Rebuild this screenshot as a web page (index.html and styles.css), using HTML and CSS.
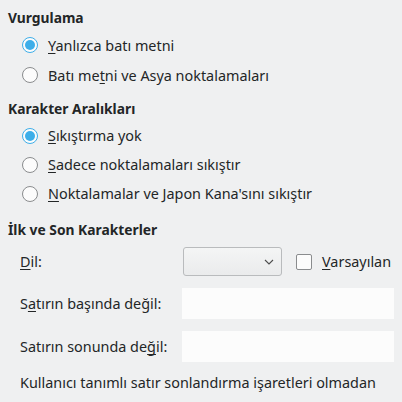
FILE: index.html
```html
<!DOCTYPE html>
<html lang="tr">
<head>
    <meta charset="UTF-8">
    <title>Asya Tipografisi</title>
    <link rel="stylesheet" href="styles.css">
</head>
<body>
    <div class="page">
        <section class="group">
            <h2 class="group-title">Vurgulama</h2>
            <div class="options first">
                <label class="radio-row"><span class="radio checked"></span><span><u>Y</u>anlızca batı metni</span></label>
                <label class="radio-row"><span class="radio"></span><span>Batı me<u>t</u>ni ve Asya noktalamaları</span></label>
            </div>
        </section>

        <section class="group">
            <h2 class="group-title">Karakter Aralıkları</h2>
            <div class="options second">
                <label class="radio-row"><span class="radio checked"></span><span><u>S</u>ıkıştırma yok</span></label>
                <label class="radio-row"><span class="radio"></span><span><u>S</u>adece noktalamaları sıkıştır</span></label>
                <label class="radio-row"><span class="radio"></span><span><u>N</u>oktalamalar ve Japon Kana'sını sıkıştır</span></label>
            </div>
        </section>

        <section class="group">
            <h2 class="group-title">İlk ve Son Karakterler</h2>
            <div class="form-grid">
                <span class="field-label"><u>D</u>il:</span>
                <div class="lang-row">
                    <div class="combo">
                        <svg width="10" height="6" viewBox="0 0 10 6"><path d="M1 1 L5 5 L9 1" fill="none" stroke="#4d4d4d" stroke-width="1.1"/></svg>
                    </div>
                    <label class="check-row"><span class="checkbox"></span><span><u>V</u>arsayılan</span></label>
                </div>

                <span class="field-label">S<u>a</u>tırın başında değil:</span>
                <div class="text-field"></div>

                <span class="field-label">Satırın sonunda de<u>ğ</u>il:</span>
                <div class="text-field"></div>
            </div>
            <p class="note">Kullanıcı tanımlı satır sonlandırma işaretleri olmadan</p>
        </section>
    </div>
</body>
</html>
```

FILE: styles.css
```css
body {
    margin: 0;
    background: #eff0f1;
    color: #232627;
    font-family: 'Noto Sans', sans-serif;
    font-size: 14.4px;
}

.page {
    padding: 8px 8px 0 8px;
}

.group-title {
    margin: 0;
    height: 20px;
    line-height: 20px;
    font-size: 13.8px;
    font-weight: bold;
}

u {
    text-decoration-skip-ink: none;
    text-underline-offset: 2px;
}

/* radio lists */
.options {
    display: flex;
    flex-direction: column;
    padding-left: 14px;
    margin-top: 2px;
    margin-bottom: 9px;
}

.options.first .radio-row {
    height: 30px;
}

.options.second {
    margin-bottom: 12px;
}

.radio-row {
    display: flex;
    align-items: center;
    gap: 10px;
    height: 29px;
}

.radio {
    width: 14px;
    height: 14px;
    border: 1px solid #8a8c8e;
    border-radius: 50%;
    background: #fcfcfc;
    position: relative;
    flex-shrink: 0;
}

.radio.checked {
    border-color: #3daee9;
}

.radio.checked::after {
    content: '';
    position: absolute;
    left: 2px;
    top: 2px;
    width: 10px;
    height: 10px;
    border-radius: 50%;
    background: #3daee9;
}

/* first/last chars form */
.form-grid {
    display: grid;
    grid-template-columns: 162px 1fr;
    grid-template-rows: 29px 31px 31px;
    row-gap: 12px;
    align-items: center;
    padding-left: 12px;
    margin-top: 7px;
}

.lang-row {
    display: flex;
    align-items: center;
}

.combo {
    width: 90px;
    height: 27px;
    margin-left: 1px;
    padding-right: 7px;
    border: 1px solid #b9bbbd;
    border-radius: 3px;
    background: linear-gradient(#f4f5f5, #eaebec);
    display: flex;
    align-items: center;
    justify-content: flex-end;
}

.check-row {
    display: flex;
    align-items: center;
    gap: 10px;
    margin-left: 14px;
}

.checkbox {
    width: 14px;
    height: 14px;
    border: 1px solid #8a8c8e;
    border-radius: 2px;
    background: #fcfcfc;
}

.text-field {
    height: 31px;
    background: #fcfcfc;
}

.note {
    margin: 11px 0 0 12px;
    line-height: 20px;
}
```
